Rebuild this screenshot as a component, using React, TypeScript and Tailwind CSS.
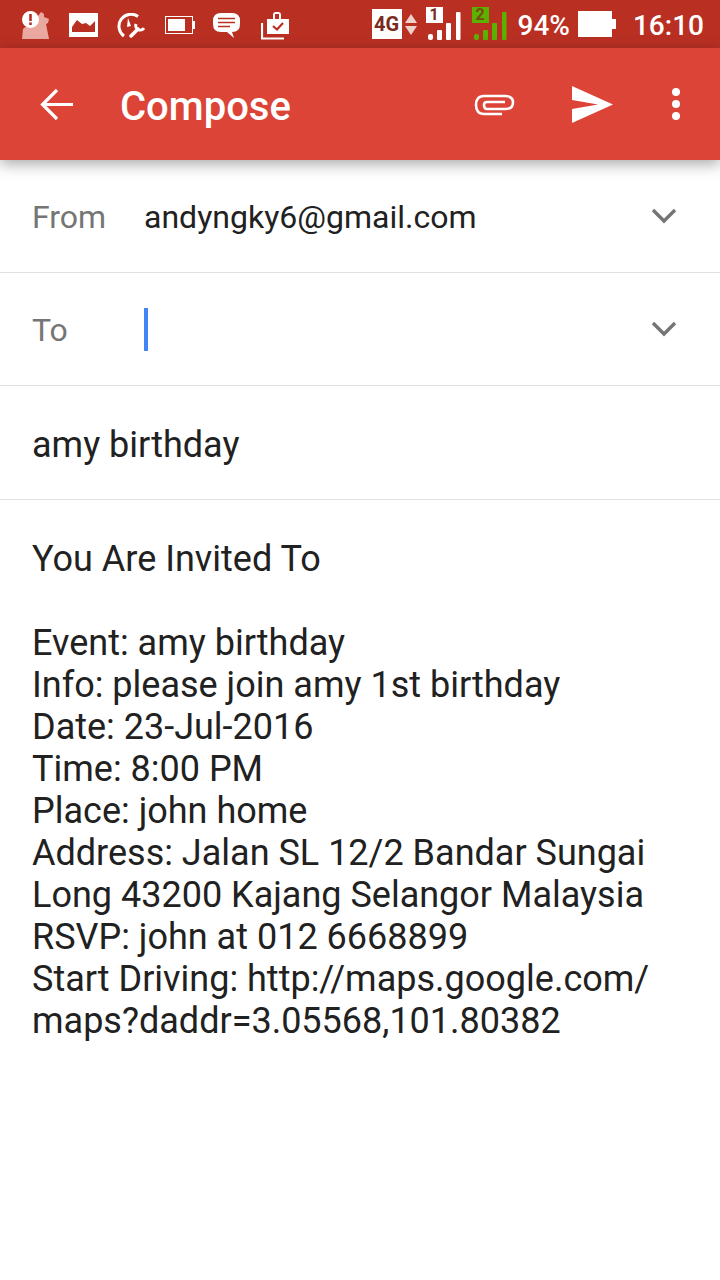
const font = "font-['Roboto',sans-serif]";

const StatusIcons = () => (
  <div className="flex items-center pl-[21px] pt-[2px]">
    <div className="w-[48px]">
      <svg width="30" height="30" viewBox="0 0 30 30">
        <path d="M1 29 L2 19 L8 14 L13 14 L17 6 L20 2 L23 4 L23 7 L28 9 L27 13 L25 14 L28 29 Z" fill="#e9a9a0" />
        <circle cx="9.5" cy="9.5" r="8.5" fill="#fff" />
        <rect x="8.2" y="4" width="2.6" height="7" fill="#b93023" />
        <rect x="8.2" y="12.4" width="2.6" height="2.6" fill="#b93023" />
      </svg>
    </div>
    <div className="w-[48px]">
      <svg width="29" height="24" viewBox="0 0 29 24">
        <rect width="29" height="24" fill="#fff" />
        <path d="M3 19 V14 L8 7 L13 11 L17 10 L21 13 L26 8 V19 Z" fill="#b93023" />
      </svg>
    </div>
    <div className="w-[48px]">
      <svg width="28" height="25" viewBox="0 0 28 25" fill="none">
        <path d="M7 23 A11 11 0 1 1 21 3.5" stroke="#fff" strokeWidth="3" />
        <path d="M11 5 L14 13 L10 14 Z" fill="#fff" />
        <path d="M14 23 L21 16" stroke="#fff" strokeWidth="3.5" strokeLinecap="round" />
        <path d="M19 11 a4.5 4.5 0 0 0 8 4" stroke="#fff" strokeWidth="3" />
      </svg>
    </div>
    <div className="w-[48px] flex items-center">
      <div className="w-[28px] h-[18px] border border-white p-[2px] pr-[7px]">
        <div className="w-full h-full bg-white" />
      </div>
      <div className="w-[2px] h-[8px] bg-white" />
    </div>
    <div className="w-[48px]">
      <svg width="27" height="25" viewBox="0 0 27 25">
        <path d="M8 0 H19 Q27 0 27 8 V11 Q27 19 19 19 L21 25 L14 19 H8 Q0 19 0 11 V8 Q0 0 8 0 Z" fill="#fff" />
        <path d="M5 5.5 H22 M5 9.5 H22 M5 13.5 H17" stroke="#b93023" strokeWidth="1.6" />
      </svg>
    </div>
    <svg width="29" height="29" viewBox="0 0 29 29">
      <path d="M1 12 V27.5 H23" fill="none" stroke="#fff" strokeWidth="2.2" />
      <path d="M6 8 H12 V4 Q12 1 15 1 H17 Q20 1 20 4 V8 H28 V23 H6 Z" fill="#fff" />
      <path d="M14 3 H18 V8 H14 Z" fill="#b93023" />
      <path d="M12 15 L16 18.5 L22 12" fill="none" stroke="#b93023" strokeWidth="2.2" />
    </svg>
  </div>
);

const SimBars = ({ badge, num, digit }: { badge: string; num: string; digit: string }) => (
  <div className="relative w-[35px] h-[34px]">
    <div className={`absolute left-0 top-0 w-[17px] h-[16px] flex items-center justify-center text-[16px] font-bold leading-none ${badge} ${digit}`}>
      {num}
    </div>
    <svg width="35" height="34" viewBox="0 0 35 34">
      <rect x="2" y="27" width="5" height="6" rx="2" fill="currentColor" />
      <rect x="11" y="23" width="5" height="10" rx="1" fill="currentColor" />
      <rect x="20" y="16" width="5" height="17" rx="1" fill="currentColor" />
      <rect x="30" y="5" width="4.5" height="28" rx="1" fill="currentColor" />
    </svg>
  </div>
);

const FieldRow = ({ label, value, caret }: { label: string; value?: string; caret?: boolean }) => (
  <div className="flex items-center h-[113px] pl-[32px] pr-[43px] border-b border-[#e0e0e0]">
    <span className="w-[112px] pt-[2px] text-[32px] text-[#757575]">{label}</span>
    {value && <span className="pt-[2px] text-[32px] text-[#212121]">{value}</span>}
    {caret && <div className="w-[4px] h-[43px] bg-[#4285f4]" />}
    <svg className="ml-auto" width="26" height="16" viewBox="0 0 26 16" fill="none">
      <path d="M2 2 L13 13 L24 2" stroke="#757575" strokeWidth="3.4" />
    </svg>
  </div>
);

const bodyLines = [
  "Event: amy birthday",
  "Info: please join amy 1st birthday",
  "Date: 23-Jul-2016",
  "Time: 8:00 PM",
  "Place: john home",
  "Address: Jalan SL 12/2 Bandar Sungai",
  "Long 43200 Kajang Selangor Malaysia",
  "RSVP: john at 012 6668899",
  "Start Driving: http://maps.google.com/",
  "maps?daddr=3.05568,101.80382",
];

export default function App() {
  return (
    <div className={`w-[720px] h-[1280px] bg-white overflow-hidden ${font}`}>
      <div className="h-[48px] bg-[#b93023] flex items-center justify-between">
        <StatusIcons />
        <div className="flex items-center pr-[16px] text-white">
          <div className="w-[30px] h-[30px] bg-white text-[#7a2a20] text-[20px] font-bold flex items-center justify-center leading-none">4G</div>
          <div className="flex flex-col gap-[3px] ml-[3px] mr-[9px]">
            <div className="w-0 h-0 border-x-[6px] border-x-transparent border-b-[9px] border-b-[#f0d0cb]" />
            <div className="w-0 h-0 border-x-[6px] border-x-transparent border-t-[9px] border-t-[#f0d0cb]" />
          </div>
          <div className="text-white"><SimBars badge="bg-white" num="1" digit="text-[#7a2a20]" /></div>
          <div className="text-[#5cb000] ml-[11px]"><SimBars badge="bg-[#5cb000]" num="2" digit="text-[#7a4a10]" /></div>
          <span className="ml-[11px] text-[28px] font-medium leading-none pt-[4px]">94%</span>
          <div className="flex items-center ml-[8px]">
            <div className="w-[34px] h-[26px] bg-white" />
            <div className="w-[4px] h-[10px] bg-white" />
          </div>
          <span className="ml-[17px] text-[28px] font-medium leading-none pt-[4px]">16:10</span>
        </div>
      </div>

      <div className="relative z-10 h-[112px] bg-[#db4437] shadow-[0_4px_14px_rgba(0,0,0,0.35)] flex items-center">
        <svg className="ml-[40px]" width="33" height="33" viewBox="0 0 33 33" fill="none">
          <path d="M33 16.5 H3 M17 2 L2.5 16.5 L17 31" stroke="#fff" strokeWidth="3.2" />
        </svg>
        <span className="ml-[47px] pt-[6px] text-[40px] font-medium text-white">Compose</span>
        <svg className="ml-auto mt-[2px]" width="42" height="24" viewBox="0 0 42 24" fill="none">
          <path d="M28 21 H10 Q2 21 2 12 Q2 3 10 3 H31 Q39 3 39 9.5 Q39 16 31 16 H13 Q10 16 10 12 Q10 9 13 9 H31" stroke="#fff" strokeWidth="2.6" />
        </svg>
        <svg className="ml-[55px]" width="42" height="37" viewBox="0 0 42 37">
          <path d="M1 0 L42 18.5 L1 37 L1 23 L27 18.5 L1 14 Z" fill="#fff" />
        </svg>
        <div className="ml-[59px] mr-[40px] flex flex-col gap-[4px]">
          <div className="w-[8px] h-[8px] rounded-full bg-white" />
          <div className="w-[8px] h-[8px] rounded-full bg-white" />
          <div className="w-[8px] h-[8px] rounded-full bg-white" />
        </div>
      </div>

      <FieldRow label="From" value="andyngky6@gmail.com" />
      <FieldRow label="To" caret />
      <div className="h-[114px] flex items-center pl-[32px] pt-[4px] border-b border-[#e0e0e0] text-[36px] text-[#212121]">
        amy birthday
      </div>

      <div className="pl-[32px] pt-[38px] text-[36px] leading-[42px] text-[#212121] whitespace-pre">
        <div>You Are Invited To</div>
        <div className="h-[42px]" />
        {bodyLines.map((line) => (
          <div key={line}>{line}</div>
        ))}
      </div>
    </div>
  );
}
